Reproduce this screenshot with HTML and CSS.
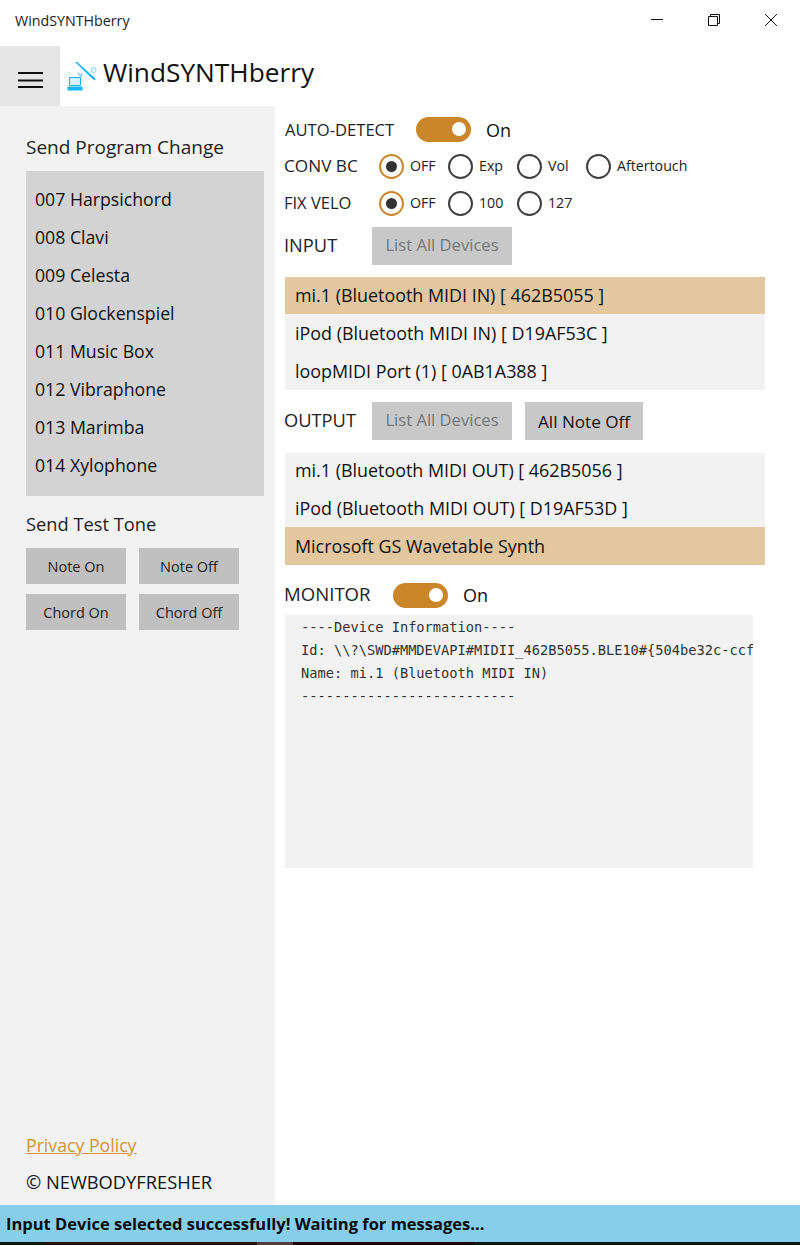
FILE: index.html
```html
<!DOCTYPE html>
<html lang="en">
<head>
<meta charset="utf-8">
<title>WindSYNTHberry</title>
<link rel="stylesheet" href="styles.css">
</head>
<body>
<div class="window">
  <header class="titlebar">
    <span class="title-text">WindSYNTHberry</span>
    <div class="caption">
      <span class="cap-btn"><svg width="14" height="14" viewBox="0 0 14 14"><path d="M1 6.500H13" stroke="#111" fill="none"/></svg></span>
      <span class="cap-btn"><svg width="14" height="14" viewBox="0 0 14 14"><path d="M1.500 3.500H10.500V12.500H1.500Z M3.500 3.500V1.500H12.500V10.500H10.500" stroke="#111" fill="none"/></svg></span>
      <span class="cap-btn"><svg width="14" height="14" viewBox="0 0 14 14"><path d="M1 1L13 13M13 1L1 13" stroke="#111" fill="none"/></svg></span>
    </div>
  </header>
  <div class="appbar">
    <div class="hamburger"><svg width="25" height="18" viewBox="0 0 25 18"><path d="M0 2H25M0 9.500H25M0 16H25" stroke="#111" stroke-width="2" fill="none"/></svg></div>
    <svg class="logo" width="32" height="32" viewBox="0 0 32 32">
      <path d="M8 0L10 0L28.500 16.500L28 18.500L25 16.500Z" fill="#19b5ee"/>
      <circle cx="26.500" cy="8" r="2.600" stroke="#8fd9f5" fill="#e4f6fd"/>
      <path d="M11 10.500L12.500 14L15 11.500L13.500 16" stroke="#4cc3ef" fill="none"/>
      <path d="M2.500 15.500H13.500V23.500H2.500Z" stroke="#19b5ee" fill="#d6f3fd"/>
      <path d="M0.500 24.500H15.500L15.500 28.500H0.500Z" fill="#19b5ee"/>
    </svg>
    <span class="app-name">WindSYNTHberry</span>
  </div>
  <div class="content">
    <aside class="pane">
      <h2 class="pane-title">Send Program Change</h2>
      <ul class="programs">
        <li>007 Harpsichord</li><li>008 Clavi</li><li>009 Celesta</li><li>010 Glockenspiel</li>
        <li>011 Music Box</li><li>012 Vibraphone</li><li>013 Marimba</li><li>014 Xylophone</li>
      </ul>
      <h2 class="tone-title">Send Test Tone</h2>
      <div class="tone-grid">
        <button class="tone">Note On</button><button class="tone">Note Off</button>
        <button class="tone">Chord On</button><button class="tone">Chord Off</button>
      </div>
      <div class="pane-foot">
        <a class="privacy" href="#">Privacy Policy</a>
        <span class="copy">© NEWBODYFRESHER</span>
      </div>
    </aside>
    <main class="main">
      <div class="row row-auto">
        <span class="label lab-auto">AUTO-DETECT</span>
        <span class="toggle"><span class="knob"></span></span>
        <span class="on">On</span>
      </div>
      <div class="row row-radio">
        <span class="label lab-radio lab-conv">CONV BC</span>
        <span class="radio checked"></span><span class="r-text w-off">OFF</span>
        <span class="radio"></span><span class="r-text w-off">Exp</span>
        <span class="radio"></span><span class="r-text w-off">Vol</span>
        <span class="radio"></span><span class="r-text">Aftertouch</span>
      </div>
      <div class="row row-radio">
        <span class="label lab-radio">FIX VELO</span>
        <span class="radio checked"></span><span class="r-text w-off">OFF</span>
        <span class="radio"></span><span class="r-text w-off">100</span>
        <span class="radio"></span><span class="r-text">127</span>
      </div>
      <div class="row row-input">
        <span class="label lab-io">INPUT</span>
        <button class="btn muted">List All Devices</button>
      </div>
      <ul class="devices">
        <li class="sel">mi.1 (Bluetooth MIDI IN) [ 462B5055 ]</li>
        <li>iPod (Bluetooth MIDI IN) [ D19AF53C ]</li>
        <li>loopMIDI Port (1) [ 0AB1A388 ]</li>
      </ul>
      <div class="row row-output">
        <span class="label lab-io">OUTPUT</span>
        <button class="btn muted">List All Devices</button>
        <button class="btn">All Note Off</button>
      </div>
      <ul class="devices devices-out">
        <li>mi.1 (Bluetooth MIDI OUT) [ 462B5056 ]</li>
        <li>iPod (Bluetooth MIDI OUT) [ D19AF53D ]</li>
        <li class="sel">Microsoft GS Wavetable Synth</li>
      </ul>
      <div class="row row-monitor">
        <span class="label lab-mon">MONITOR</span>
        <span class="toggle"><span class="knob"></span></span>
        <span class="on">On</span>
      </div>
      <pre class="monitor">----Device Information----
Id: \\?\SWD#MMDEVAPI#MIDII_462B5055.BLE10#{504be32c-ccf
Name: mi.1 (Bluetooth MIDI IN)
--------------------------</pre>
    </main>
  </div>
  <footer class="status">Input Device selected successfully! Waiting for messages...</footer>
  <div class="desktop"></div>
</div>
</body>
</html>
```
FILE: styles.css
```css
* { box-sizing: border-box; }
html, body { margin: 0; padding: 0; }
body { background: #fff; font-family: "Open Sans", "Noto Sans", sans-serif; color: #111; }
.window { width: 800px; height: 1245px; display: flex; flex-direction: column; overflow: hidden; }
.titlebar { height: 46px; flex: none; display: flex; align-items: center; justify-content: space-between; padding: 0 1px 0 15px; }
.title-text { font-size: 14.250px; color: #222; margin-top: -5px; }
.caption { display: flex; align-self: flex-start; }
.cap-btn { width: 57px; height: 40px; display: flex; align-items: center; padding-left: 22px; }
.appbar { height: 60px; flex: none; display: flex; align-items: center; }
.hamburger { width: 60px; height: 60px; background: #e6e6e6; display: flex; align-items: center; justify-content: center; padding-top: 8px; }
.logo { margin-left: 7px; margin-top: 4px; }
.app-name { font-size: 26.250px; margin-left: 4px; margin-top: -9px; color: #111; }
.content { flex: 1; min-height: 0; display: flex; }
.pane { width: 275px; flex: none; background: #f2f2f2; padding: 26px 11px 0 26px; display: flex; flex-direction: column; }
.pane-title { font-size: 19px; font-weight: 400; margin: 0; height: 39px; line-height: 30px; color: #222; }
.programs { list-style: none; margin: 0; padding: 9px 0 12px; background: #d3d3d3; height: 325px; }
.programs li { height: 38px; line-height: 38px; padding-left: 9px; font-size: 17.700px; }
.tone-title { font-size: 18.300px; font-weight: 400; margin: 0; padding-top: 14px; height: 52px; line-height: 28px; color: #222; }
.tone-grid { display: grid; grid-template-columns: 100px 100px; column-gap: 13px; row-gap: 10px; }
.tone { height: 36px; border: 0; background: #c0c0c0; font: inherit; font-size: 14.500px; color: #222; padding: 0; }
.pane-foot { margin-top: auto; display: flex; flex-direction: column; padding-bottom: 9px; }
.privacy { font-size: 17.700px; color: #d4923a; line-height: 28px; }
.copy { font-size: 18.300px; line-height: 28px; margin-top: 9px; }
.main { flex: 1; padding: 10px 0 0 9px; display: flex; flex-direction: column; }
.row { display: flex; align-items: center; }
.label { color: #222; font-size: 17.500px; }
.row-auto { height: 26px; }
.lab-auto { width: 132px; padding-left: 1px; font-size: 16.600px; }
.toggle { width: 55px; height: 25px; border-radius: 13px; background: #cc862a; display: flex; align-items: center; justify-content: flex-end; padding-right: 5px; flex: none; }
.knob { width: 14px; height: 14px; border-radius: 50%; background: #fff; }
.on { font-size: 18px; margin-left: 15px; margin-top: 2px; }
.row-radio { height: 37px; }
.row-auto + .row-radio { margin-top: 6px; }
.lab-radio { width: 95px; font-size: 16.500px; margin-top: -2px; }
.lab-conv { font-size: 17.200px; }
.radio { width: 25px; height: 25px; border-radius: 50%; border: 2.500px solid #3f3f3f; flex: none; display: flex; align-items: center; justify-content: center; }
.radio.checked { border-color: #cc862a; }
.radio.checked::after { content: ""; width: 11px; height: 11px; border-radius: 50%; background: #333; }
.r-text { font-size: 14.200px; margin-left: 6px; margin-top: -3px; color: #222; }
.w-off { width: 32px; margin-right: 6px; margin-left: 6px; }
.row-input { height: 38px; margin-top: 5px; }
.lab-io { width: 88px; font-size: 18.300px; margin-top: -4px; }
.btn { height: 38px; width: 118px; border: 0; background: #c8c8c8; font: inherit; font-size: 17.100px; color: #111; padding: 0; }
.btn.muted { color: #777; width: 140px; font-size: 16.600px; padding-bottom: 3px; }
.btn + .btn { margin-left: 13px; }
.devices { list-style: none; margin: 12px 0 0 1px; padding: 0; width: 480px; background: #f2f2f2; }
.devices li { height: 38px; line-height: 39px; padding-left: 10px; font-size: 17.900px; }
.devices li.sel { height: 37px; line-height: 37px; background: #e2c79f; }
.row-output { height: 38px; margin-top: 12px; }
.devices-out { margin-top: 13px; }
.devices-out li { height: 37px; line-height: 35px; }
.devices-out li:nth-child(2) { line-height: 37px; }
.devices-out li.sel { height: 38px; line-height: 39px; }
.row-monitor { height: 26px; margin-top: 17px; }
.lab-mon { width: 109px; font-size: 18.600px; margin-top: -4px; }
.row-monitor .on { margin-top: 0; }
.monitor { margin: 7px 0 0 1px; width: 468px; height: 253px; background: #f2f2f2; font-family: "DejaVu Sans Mono", monospace; font-size: 13.700px; line-height: 23px; padding: 1px 0 0 16px; color: #333; overflow: hidden; white-space: pre; }
.status { height: 37px; flex: none; background: #87ceeb; font-weight: 700; font-size: 16.500px; line-height: 38px; padding-left: 6px; color: #0a0a0a; }
.desktop { height: 3px; flex: none; background: linear-gradient(90deg, #0f1a12 0 45px, #2a1208 45px 257px, #533c3c 257px 293px, #1f0608 293px 475px, #0f1a14 475px 100%); }
```
